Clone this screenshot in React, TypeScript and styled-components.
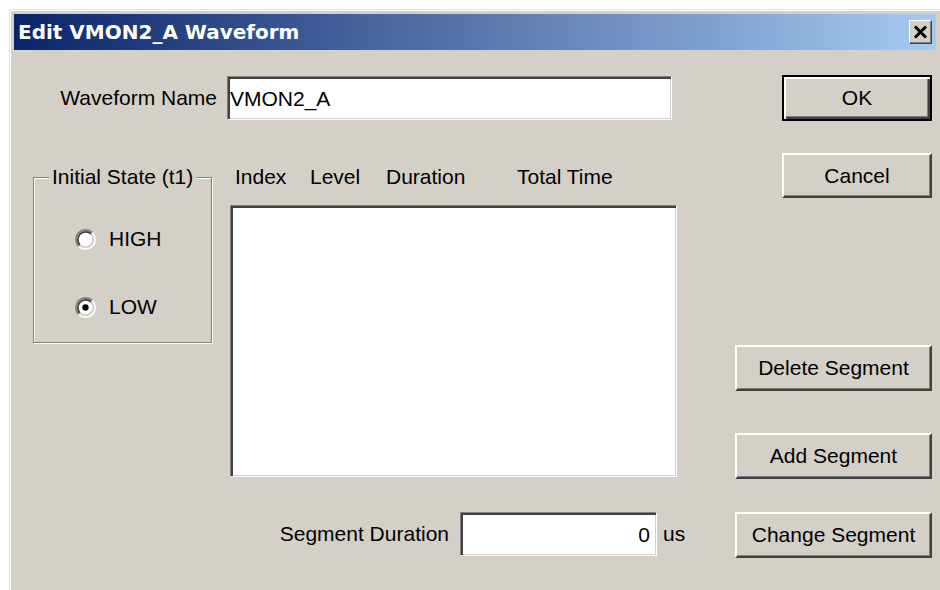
import React from "react";
import styled, { createGlobalStyle, css } from "styled-components";

const Global = createGlobalStyle`
  html, body { margin: 0; padding: 0; background: #fff; }
  body {
    font-family: "Liberation Sans", Arial, sans-serif;
    font-size: 21px;
    color: #000;
  }
`;

const sunken = css`
  box-sizing: border-box;
  background: #fff;
  border: 1px solid;
  border-color: #808080 #fff #fff #808080;
  box-shadow: inset 2px 2px 0 #404040, inset -1px -1px 0 #d4d0c8;
`;

const Window = styled.div`
  box-sizing: border-box;
  margin: 9px 0 0 9px;
  width: 931px;
  height: 581px;
  padding: 4px 4px 0 4px;
  background: #d4d0c8;
  border-top: 1px solid #e4e2de;
  border-left: 1px solid #e4e2de;
  box-shadow: inset 1px 1px 0 #fff;
  display: flex;
  flex-direction: column;
  overflow: hidden;
`;

const TitleBar = styled.div`
  flex: none;
  height: 36px;
  display: flex;
  align-items: center;
  justify-content: space-between;
  padding: 0 4px 0 4px;
  background: linear-gradient(to right, #0a246a, #a6caf0);
`;

const Title = styled.span`
  font-family: "DejaVu Sans", Verdana, sans-serif;
  font-weight: bold;
  font-size: 20px;
  color: #fff;
  white-space: nowrap;
`;

const CloseButton = styled.div`
  box-sizing: border-box;
  width: 23px;
  height: 24px;
  display: flex;
  align-items: center;
  justify-content: center;
  background: #d4d0c8;
  border: 1px solid;
  border-color: #fff #404040 #404040 #fff;
  box-shadow: inset -1px -1px 0 #808080;
`;

const Client = styled.div`
  flex: 1;
  display: flex;
  align-items: flex-start;
`;

const MainCol = styled.div`
  width: 686px;
  display: flex;
  flex-direction: column;
`;

const ButtonCol = styled.div`
  margin-left: 35px;
  width: 197px;
  display: flex;
  flex-direction: column;
  align-items: flex-end;
`;

const PushButton = styled.button<{ $w: number; $h: number; $mt: number; $default?: boolean }>`
  box-sizing: border-box;
  width: ${(p) => p.$w}px;
  height: ${(p) => p.$h}px;
  margin-top: ${(p) => p.$mt}px;
  padding: 0;
  background: #d4d0c8;
  font-family: "Liberation Sans", Arial, sans-serif;
  font-size: 21px;
  color: #000;
  cursor: default;
  ${(p) =>
    p.$default
      ? css`
          border: 2px solid #000;
          box-shadow: inset 2px 2px 0 #fff, inset -2px -2px 0 #404040, inset -3px -3px 0 #808080;
        `
      : css`
          border: 2px solid;
          border-color: #fff #404040 #404040 #fff;
          box-shadow: inset -1px -1px 0 #808080;
        `}
`;

const NameRow = styled.div`
  margin-top: 26px;
  height: 44px;
  display: flex;
  align-items: center;
`;

const RightLabel = styled.div<{ $w: number }>`
  width: ${(p) => p.$w}px;
  flex: none;
  display: flex;
  justify-content: flex-end;
  white-space: nowrap;
`;

const TextField = styled.input<{ $w: number; $right?: boolean }>`
  ${sunken};
  width: ${(p) => p.$w}px;
  height: 44px;
  margin-left: ${(p) => (p.$right ? 11 : 10)}px;
  padding: 2px ${(p) => (p.$right ? 6 : 2)}px 0 2px;
  text-align: ${(p) => (p.$right ? "right" : "left")};
  font-family: "Liberation Sans", Arial, sans-serif;
  font-size: 21px;
  color: #000;
  outline: none;
`;

const MiddleRow = styled.div`
  margin-top: 45px;
  display: flex;
  align-items: flex-start;
`;

const GroupBox = styled.div`
  box-sizing: border-box;
  margin: 12px 0 0 19px;
  width: 179px;
  height: 166px;
  border: 1px solid #808080;
  box-shadow: inset 1px 1px 0 #fff, 1px 1px 0 #fff;
  display: flex;
  flex-direction: column;
`;

const GroupCaption = styled.span`
  align-self: flex-start;
  margin: -13px 0 0 15px;
  padding: 0 3px;
  line-height: 24px;
  background: #d4d0c8;
  white-space: nowrap;
`;

const RadioRow = styled.label<{ $mt: number }>`
  margin: ${(p) => p.$mt}px 0 0 41px;
  height: 24px;
  display: flex;
  align-items: center;
  gap: 13px;
`;

const ListCol = styled.div`
  margin-left: 18px;
  width: 447px;
  display: flex;
  flex-direction: column;
`;

const Headers = styled.div`
  height: 24px;
  padding-left: 5px;
  display: grid;
  grid-template-columns: 75px 76px 131px auto;
  align-items: center;
  white-space: nowrap;
`;

const ListBox = styled.div`
  ${sunken};
  margin-top: 16px;
  height: 272px;
`;

const SegmentRow = styled.div`
  margin-top: 35px;
  height: 44px;
  display: flex;
  align-items: center;
`;

const Unit = styled.span`
  margin-left: 6px;
`;

function Radio({ checked }: { checked?: boolean }) {
  return (
    <svg width="21" height="21" viewBox="0 0 12 12">
      <circle cx="6" cy="6" r="4.2" fill="#fff" />
      <path d="M2.11 9.89 A5.5 5.5 0 0 1 9.89 2.11" fill="none" stroke="#808080" strokeWidth="1" />
      <path d="M9.89 2.11 A5.5 5.5 0 0 1 2.11 9.89" fill="none" stroke="#fff" strokeWidth="1" />
      <path d="M2.82 9.18 A4.5 4.5 0 0 1 9.18 2.82" fill="none" stroke="#404040" strokeWidth="1" />
      <path d="M9.18 2.82 A4.5 4.5 0 0 1 2.82 9.18" fill="none" stroke="#d4d0c8" strokeWidth="1" />
      {checked && <circle cx="6" cy="6" r="1.8" fill="#000" />}
    </svg>
  );
}

function CloseGlyph() {
  return (
    <svg width="15" height="14" viewBox="0 0 15 14">
      <path d="M2 1.5 L13 12.5 M13 1.5 L2 12.5" stroke="#000" strokeWidth="3" />
    </svg>
  );
}

export default function App() {
  return (
    <>
      <Global />
      <Window>
        <TitleBar>
          <Title>Edit VMON2_A Waveform</Title>
          <CloseButton>
            <CloseGlyph />
          </CloseButton>
        </TitleBar>
        <Client>
          <MainCol>
            <NameRow>
              <RightLabel $w={203}>Waveform Name</RightLabel>
              <TextField $w={445} defaultValue="VMON2_A" />
            </NameRow>
            <MiddleRow>
              <GroupBox>
                <GroupCaption>Initial State (t1)</GroupCaption>
                <RadioRow $mt={38}>
                  <Radio />
                  HIGH
                </RadioRow>
                <RadioRow $mt={44}>
                  <Radio checked />
                  LOW
                </RadioRow>
              </GroupBox>
              <ListCol>
                <Headers>
                  <span>Index</span>
                  <span>Level</span>
                  <span>Duration</span>
                  <span>Total Time</span>
                </Headers>
                <ListBox />
              </ListCol>
            </MiddleRow>
            <SegmentRow>
              <RightLabel $w={435}>Segment Duration</RightLabel>
              <TextField $w={197} $right defaultValue="0" />
              <Unit>us</Unit>
            </SegmentRow>
          </MainCol>
          <ButtonCol>
            <PushButton $w={150} $h={46} $mt={25} $default>
              OK
            </PushButton>
            <PushButton $w={150} $h={45} $mt={32}>
              Cancel
            </PushButton>
            <PushButton $w={197} $h={46} $mt={147}>
              Delete Segment
            </PushButton>
            <PushButton $w={197} $h={46} $mt={42}>
              Add Segment
            </PushButton>
            <PushButton $w={197} $h={46} $mt={33}>
              Change Segment
            </PushButton>
          </ButtonCol>
        </Client>
      </Window>
    </>
  );
}
